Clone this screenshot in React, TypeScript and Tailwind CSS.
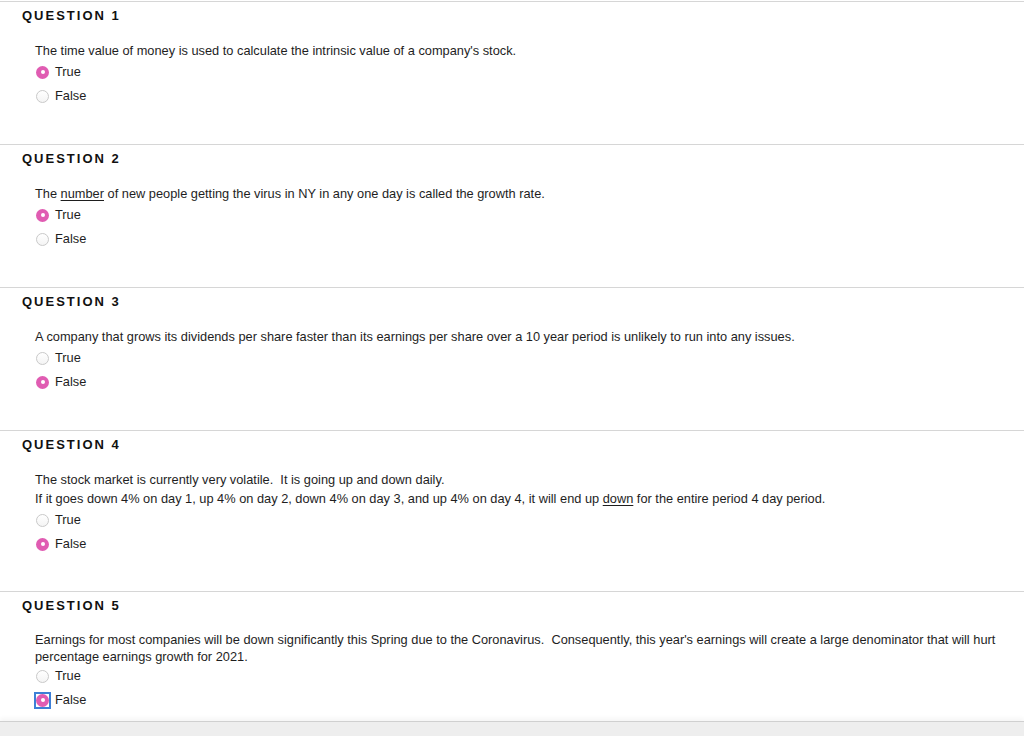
import type { ReactNode } from 'react'

type Question = {
  n: number
  body: ReactNode
  answer: 'True' | 'False'
  pad: string
  tight?: boolean
  focused?: boolean
}

const questions: Question[] = [
  {
    n: 1,
    body: <p>The time value of money is used to calculate the intrinsic value of a company's stock.</p>,
    answer: 'True',
    pad: 'pb-[36px]',
  },
  {
    n: 2,
    body: (
      <p>
        The <span className="underline underline-offset-2">number</span> of new people getting the virus in NY in any one
        day is called the growth rate.
      </p>
    ),
    answer: 'True',
    pad: 'pb-[36px]',
  },
  {
    n: 3,
    body: (
      <p>
        A company that grows its dividends per share faster than its earnings per share over a 10 year period is unlikely
        to run into any issues.
      </p>
    ),
    answer: 'False',
    pad: 'pb-[36px]',
  },
  {
    n: 4,
    body: (
      <>
        <p>The stock market is currently very volatile.&nbsp; It is going up and down daily.</p>
        <p>
          If it goes down 4% on day 1, up 4% on day 2, down 4% on day 3, and up 4% on day 4, it will end up{' '}
          <span className="underline underline-offset-2">down</span> for the entire period 4 day period.
        </p>
      </>
    ),
    answer: 'False',
    pad: 'pb-[35px]',
  },
  {
    n: 5,
    body: (
      <p>
        Earnings for most companies will be down significantly this Spring due to the Coronavirus.&nbsp; Consequently,
        this year's earnings will create a large denominator that will hurt percentage earnings growth for 2021.
      </p>
    ),
    answer: 'False',
    pad: 'pb-[9px]',
    tight: true,
    focused: true,
  },
]

function Radio({ checked, focused }: { checked: boolean; focused?: boolean }) {
  const dot = checked ? (
    <span className="flex h-[13px] w-[13px] items-center justify-center rounded-full bg-[#e05cb2]">
      <span className="h-[4px] w-[4px] rounded-full bg-white" />
    </span>
  ) : (
    <span className="h-[13px] w-[13px] rounded-full border border-[#c9c9c9] bg-gradient-to-b from-white to-[#f4f4f4]" />
  )
  if (focused) {
    return <span className="flex h-[17px] w-[17px] items-center justify-center border-2 border-[#3d7fd6]">{dot}</span>
  }
  return <span className="flex h-[17px] w-[17px] items-center justify-center">{dot}</span>
}

function QuestionBlock({ q }: { q: Question }) {
  return (
    <section className={`border-t border-[#d6d6d6] pt-[6px] ${q.pad}`}>
      <h2 className="h-[16px] pl-[22px] text-[13px] font-bold leading-[16px] tracking-[2px] text-[#111]">
        QUESTION {q.n}
      </h2>
      <div
        className={`mt-[17px] pl-[35px] pr-[22px] text-[12.8px] text-[#1e1e1e] ${
          q.tight ? 'leading-[17px]' : 'leading-[19px]'
        }`}
      >
        {q.body}
      </div>
      <div className={`pl-[34px] text-[12.8px] text-[#1e1e1e] ${q.tight ? '-mt-[1px]' : ''}`}>
        {(['True', 'False'] as const).map((opt) => (
          <label key={opt} className="flex h-[24px] items-center gap-[4px]">
            <Radio checked={q.answer === opt} focused={q.focused && q.answer === opt} />
            <span>{opt}</span>
          </label>
        ))}
      </div>
    </section>
  )
}

export default function App() {
  return (
    <div className="h-[736px] overflow-hidden bg-white pt-[1px] font-['Liberation_Sans',Arial,sans-serif]">
      {questions.map((q) => (
        <QuestionBlock key={q.n} q={q} />
      ))}
      <div className="h-[40px] border-t border-[#d0d0d0] bg-[#eeeeee] shadow-[0_-3px_4px_rgba(0,0,0,0.04)]" />
    </div>
  )
}
